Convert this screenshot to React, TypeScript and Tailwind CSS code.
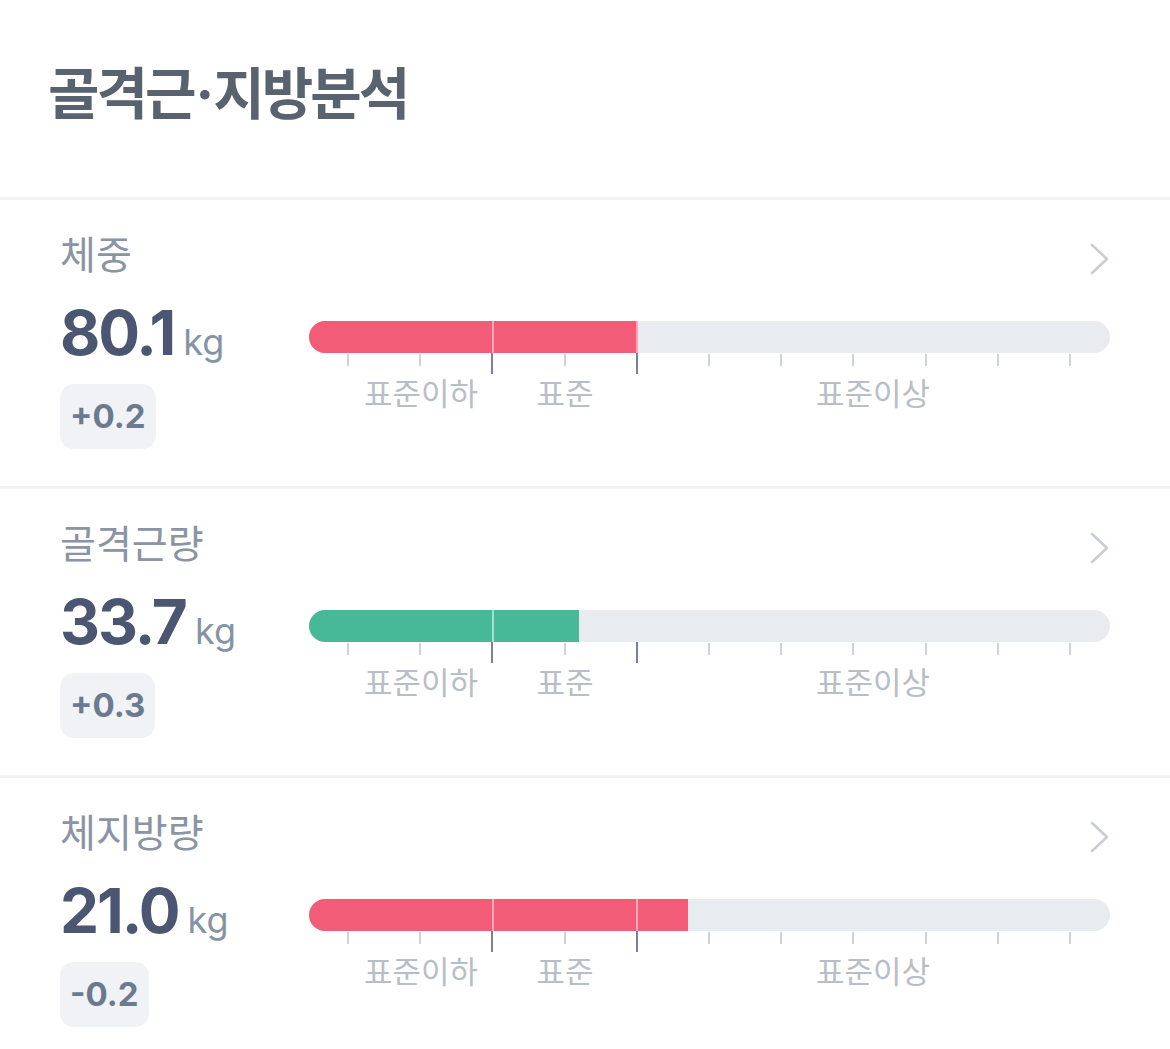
import React from "react";

const KR = { fontFamily: '"Noto Sans CJK KR", "Noto Sans", sans-serif' };
const NUM = { fontFamily: 'Inter, "Noto Sans CJK KR", sans-serif' };

type Row = {
  label: string;
  value: string;
  diff: string;
  fill: number;
  color: string;
  divider: string;
};

const rows: Row[] = [
  { label: "체중", value: "80.1", diff: "+0.2", fill: 329, color: "#f25c77", divider: "#f8a9b6" },
  { label: "골격근량", value: "33.7", diff: "+0.3", fill: 270, color: "#48b996", divider: "#a6e0cc" },
  { label: "체지방량", value: "21.0", diff: "-0.2", fill: 379, color: "#f25c77", divider: "#f8a9b6" },
];

const ticks = [0, 1, 2, 3, 4, 5, 6, 7, 8, 9, 10];

function Chevron() {
  return (
    <svg width="24" height="36" viewBox="0 0 24 36" className="mt-[8px] mr-[58px]">
      <polyline points="4,4 19,18 4,32" fill="none" stroke="#c9cdd4" strokeWidth="2.6" strokeLinecap="round" strokeLinejoin="round" />
    </svg>
  );
}

function Bar({ row }: { row: Row }) {
  return (
    <div className="w-[801px] shrink-0 pt-[19px]">
      <div className="relative h-[32px] rounded-full bg-[#e8ebf0] overflow-hidden">
        <div className="relative h-full overflow-hidden" style={{ width: row.fill, backgroundColor: row.color }}>
          <div className="absolute top-0 left-[183px] h-full w-[2px]" style={{ backgroundColor: row.divider }} />
          <div className="absolute top-0 left-[327px] h-full w-[2px]" style={{ backgroundColor: row.divider }} />
        </div>
      </div>
      <div className="ml-[38px] w-[724px] flex justify-between items-start h-[21px]">
        {ticks.map((t) =>
          t === 2 || t === 4 ? (
            <div key={t} className="w-[2px] h-[21px] bg-[#76839a]" />
          ) : (
            <div key={t} className="w-[2px] h-[12px] mt-[1px] bg-[#cfd3d9]" />
          )
        )}
      </div>
      <div className="flex text-[31px] leading-none text-[#b8bec7] mt-[2px]" style={KR}>
        <div className="w-[224px] shrink-0 text-center">표준이하</div>
        <div className="w-[64px] shrink-0 text-center whitespace-nowrap">표준</div>
        <div className="w-[552px] shrink-0 text-center">표준이상</div>
      </div>
    </div>
  );
}

function Section({ row }: { row: Row }) {
  return (
    <div className="h-[286px] pl-[60px] pt-[33px]">
      <div className="flex justify-between items-start">
        <div className="text-[39px] leading-none text-[#8a94a4]" style={KR}>
          {row.label}
        </div>
        <Chevron />
      </div>
      <div className="flex mt-[25px]">
        <div className="w-[249px] shrink-0">
          <div className="flex items-baseline h-[62px]">
            <span className="text-[62px] leading-none font-bold text-[#4a5672] tracking-[-2px]" style={NUM}>
              {row.value}
            </span>
            <span className="text-[36px] leading-none text-[#8593a6] ml-[9px]" style={NUM}>
              kg
            </span>
          </div>
          <div className="mt-[20px] inline-flex items-center h-[65px] px-[10px] rounded-[14px] bg-[#f0f2f6]">
            <span className="text-[33px] leading-none font-bold text-[#6b7a90]" style={NUM}>
              {row.diff}
            </span>
          </div>
        </div>
        <Bar row={row} />
      </div>
    </div>
  );
}

export default function App() {
  return (
    <div className="w-[1170px] h-[1049px] bg-white overflow-hidden">
      <div className="h-[197px] pl-[48px] pt-[62px]">
        <h1 className="text-[56px] leading-none font-bold text-[#59626f] tracking-[-3px]" style={KR}>
          골격근<span className="mx-[2px]" style={NUM}>·</span>지방분석
        </h1>
      </div>
      <div className="h-[3px] bg-[#f2f3f7]" />
      {rows.map((r, i) => (
        <React.Fragment key={r.label}>
          <Section row={r} />
          {i < rows.length - 1 && <div className="h-[3px] bg-[#f2f3f7]" />}
        </React.Fragment>
      ))}
    </div>
  );
}
